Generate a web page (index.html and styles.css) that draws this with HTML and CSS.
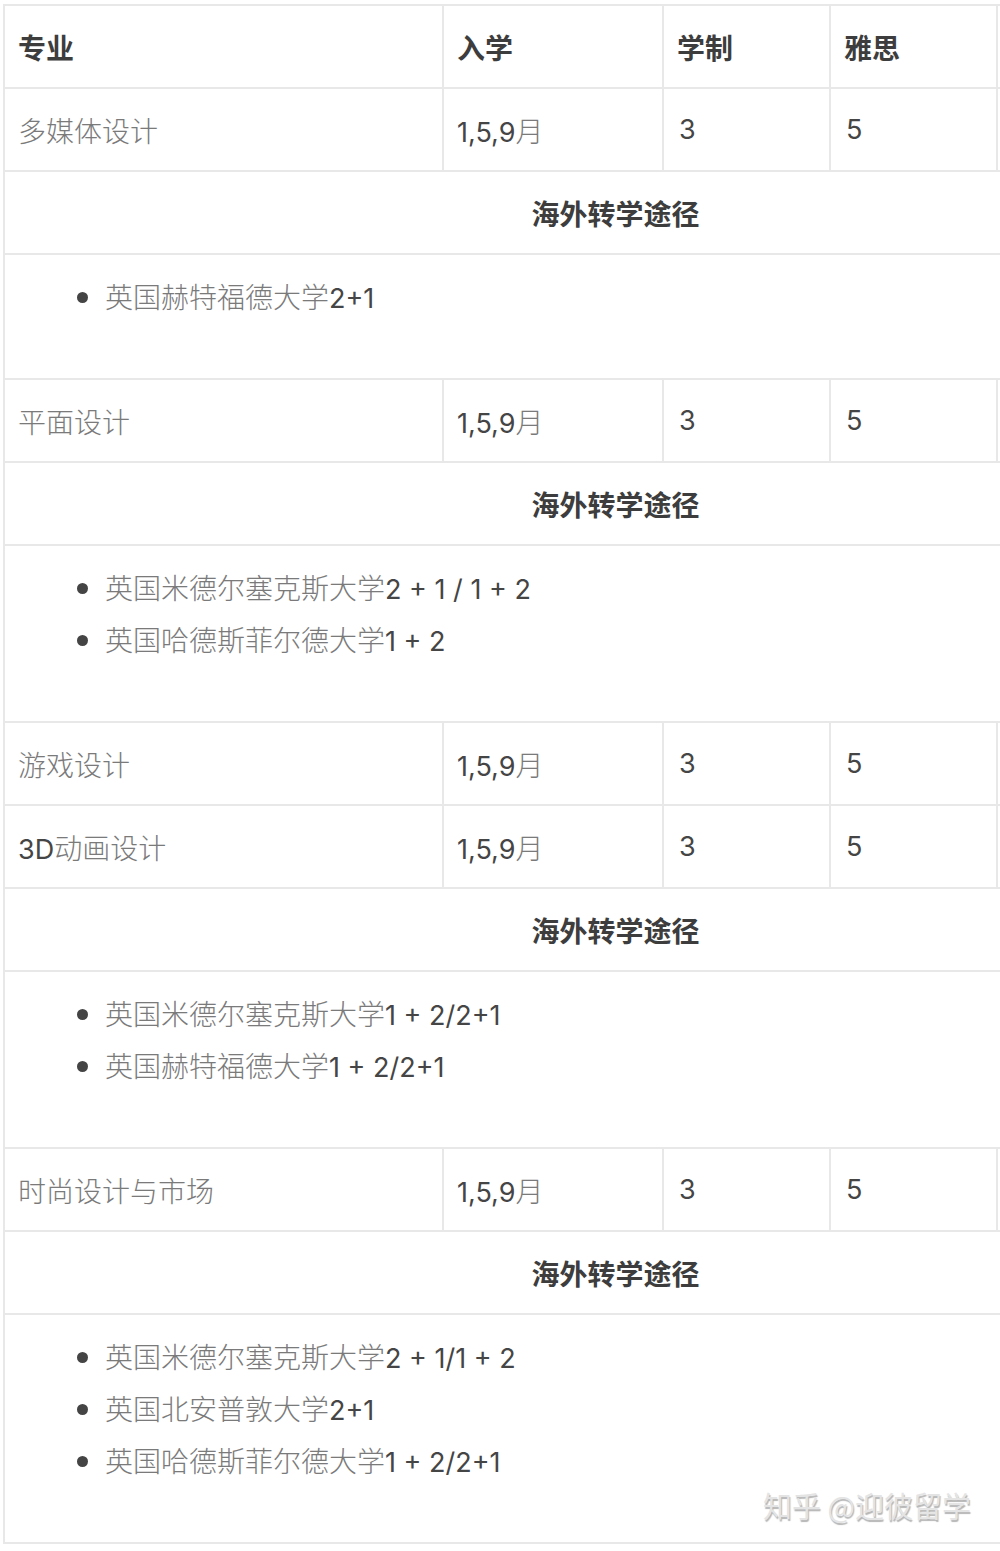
FILE: index.html
```html
<!DOCTYPE html>
<html lang="zh">
<head>
<meta charset="utf-8">
<link rel="stylesheet" href="styles.css">
</head>
<body>
<div class="page">
<table class="grid">
  <colgroup>
    <col class="c1"><col class="c2"><col class="c3"><col class="c4"><col class="c5">
  </colgroup>
  <tr class="row head">
    <td>专业</td><td>入学</td><td>学制</td><td>雅思</td><td></td>
  </tr>
  <tr class="row">
    <td class="name">多媒体设计</td><td><span class="num">1,5,9</span>月</td><td class="num">3</td><td class="num">5</td><td></td>
  </tr>
  <tr class="row"><td class="path" colspan="5">海外转学途径</td></tr>
  <tr><td class="list" colspan="5"><ul>
    <li>英国赫特福德大学<span class="num">2+1</span></li>
  </ul></td></tr>

  <tr class="row">
    <td class="name">平面设计</td><td><span class="num">1,5,9</span>月</td><td class="num">3</td><td class="num">5</td><td></td>
  </tr>
  <tr class="row"><td class="path" colspan="5">海外转学途径</td></tr>
  <tr><td class="list" colspan="5"><ul>
    <li>英国米德尔塞克斯大学<span class="num">2 + 1 / 1 + 2</span></li>
    <li>英国哈德斯菲尔德大学<span class="num">1 + 2</span></li>
  </ul></td></tr>

  <tr class="row">
    <td class="name">游戏设计</td><td><span class="num">1,5,9</span>月</td><td class="num">3</td><td class="num">5</td><td></td>
  </tr>
  <tr class="row">
    <td class="name"><span class="num">3D</span>动画设计</td><td><span class="num">1,5,9</span>月</td><td class="num">3</td><td class="num">5</td><td></td>
  </tr>
  <tr class="row"><td class="path" colspan="5">海外转学途径</td></tr>
  <tr><td class="list" colspan="5"><ul>
    <li>英国米德尔塞克斯大学<span class="num">1 + 2/2+1</span></li>
    <li>英国赫特福德大学<span class="num">1 + 2/2+1</span></li>
  </ul></td></tr>

  <tr class="row">
    <td class="name">时尚设计与市场</td><td><span class="num">1,5,9</span>月</td><td class="num">3</td><td class="num">5</td><td></td>
  </tr>
  <tr class="row"><td class="path" colspan="5">海外转学途径</td></tr>
  <tr><td class="list last" colspan="5"><ul>
    <li>英国米德尔塞克斯大学<span class="num">2 + 1/1 + 2</span></li>
    <li>英国北安普敦大学<span class="num">2+1</span></li>
    <li>英国哈德斯菲尔德大学<span class="num">1 + 2/2+1</span></li>
  </ul><span class="mark">知乎 @迎彼留学</span></td></tr>
</table>
</div>
</body>
</html>
```

FILE: styles.css
```css
html, body {
  margin: 0;
  padding: 0;
  background: #ffffff;
  overflow: hidden;
}
.page {
  width: 1000px;
  height: 1551px;
  overflow: hidden;
  padding: 4px 0 0 3px;
  box-sizing: border-box;
}
.grid {
  border-collapse: collapse;
  table-layout: fixed;
  width: 1224px;
  font-family: "Noto Sans CJK SC", "Noto Sans", sans-serif;
  font-size: 28px;
  color: #7a7a7a;
  font-weight: 300;
}
.c1 { width: 439px; }
.c2 { width: 220px; }
.c3 { width: 167px; }
.c4 { width: 167px; }
.c5 { width: 231px; }
.grid td {
  border: 2px solid #e8e8e8;
  padding: 0 14px 0 13px;
  height: 83px;
  box-sizing: border-box;
  vertical-align: middle;
  white-space: nowrap;
}
.grid td.num {
  padding-left: 15px;
}
.head td {
  font-weight: 700;
  color: #3d3d3d;
}
.num {
  font-family: "Inter", "Noto Sans", sans-serif;
  font-weight: 400;
  color: #454545;
  font-size: 27px;
}
.grid td.path {
  text-align: center;
  font-weight: 700;
  color: #3d3d3d;
}
.grid td.list {
  height: auto;
  padding: 15px 15px 56px 14px;
  vertical-align: top;
  position: relative;
}
.list ul {
  margin: 0;
  padding: 0 0 0 86px;
}
.list li {
  height: 52px;
  line-height: 52px;
}
.list li .num {
  line-height: 1;
}
.list li::marker {
  color: #444444;
}
.mark {
  position: absolute;
  left: 758px;
  bottom: 16px;
  font-size: 29px;
  font-weight: 400;
  color: #e4e4e4;
  text-shadow: 1px 2px 1px #b5b5b5;
}
```
